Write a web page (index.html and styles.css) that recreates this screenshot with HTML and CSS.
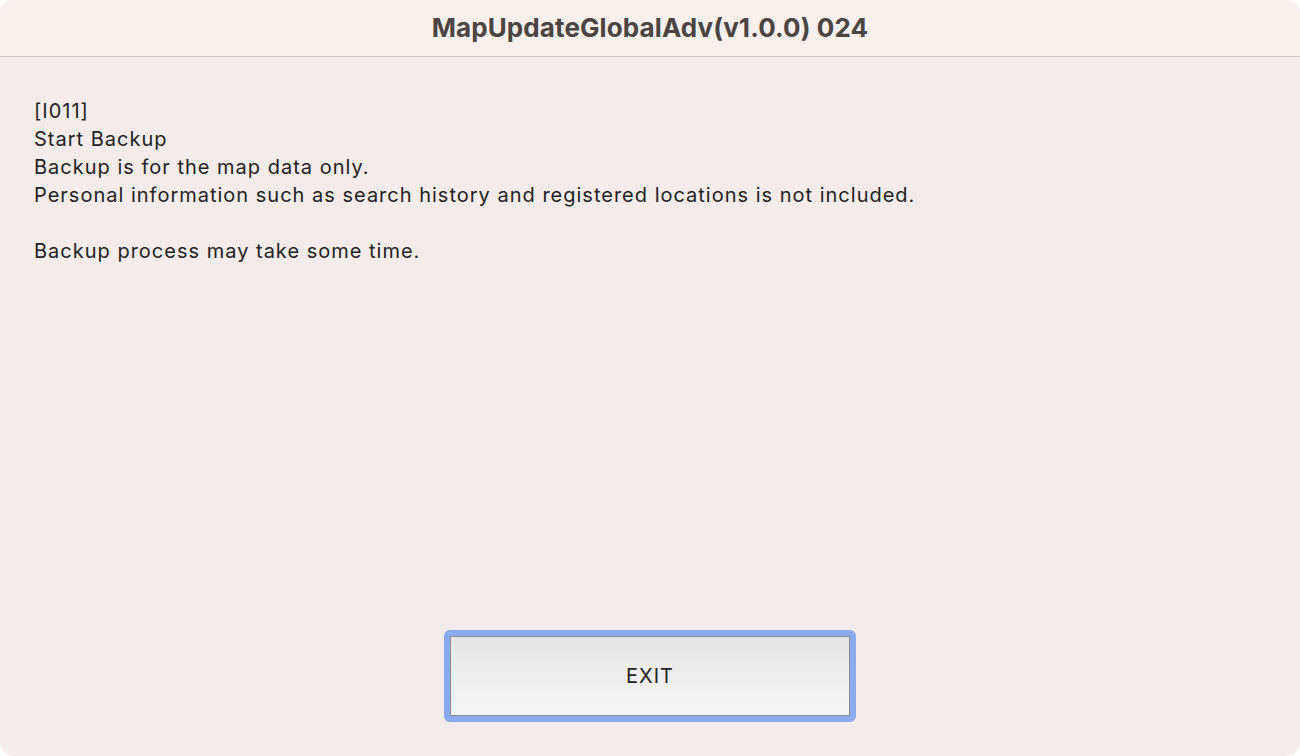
FILE: index.html
```html
<!DOCTYPE html>
<html>
  <head>
    <meta charset="utf-8">
    <title>MapUpdateGlobalAdv</title>
    <link rel="stylesheet" href="styles.css">
  </head>
  <body>
    <div class="window">
      <div class="titlebar">MapUpdateGlobalAdv(v1.0.0) 024</div>
      <div class="content">
        <div class="message">
          <p>[I011]</p>
          <p>Start Backup</p>
          <p>Backup is for the map data only.</p>
          <p>Personal information such as search history and registered locations is not included.</p>
          <p>&nbsp;</p>
          <p>Backup process may take some time.</p>
        </div>
        <div class="actions">
          <div class="focus-ring">
            <button class="exit">EXIT</button>
          </div>
        </div>
      </div>
    </div>
  </body>
</html>
```

FILE: styles.css
```css
html, body {
  margin: 0;
  padding: 0;
  height: 100%;
  background-color: #fff;
  overflow: hidden;
}
.window {
  height: 756px;
  width: 1300px;
  display: flex;
  flex-direction: column;
  background-color: #f4ecea;
  border-radius: 14px;
  overflow: hidden;
  font-family: Inter, "Noto Sans", sans-serif;
}
.titlebar {
  height: 57px;
  flex: none;
  display: flex;
  align-items: center;
  justify-content: center;
  padding-bottom: 2px;
  background-color: #f8f0ed;
  border-bottom: 1px solid #d2c9c7;
  color: #4a4442;
  font-size: 26px;
  font-weight: 700;
  letter-spacing: 0.1px;
  box-sizing: border-box;
}
.content {
  flex: 1;
  display: flex;
  flex-direction: column;
  padding: 40px 34px 34px;
}
.message {
  flex: 1;
  color: #222;
  font-size: 20px;
  line-height: 28px;
  letter-spacing: 1px;
}
.message p {
  margin: 0;
}
.actions {
  display: flex;
  justify-content: center;
}
.focus-ring {
  padding: 6px;
  border-radius: 6px;
  background-color: #8aabf0;
}
.exit {
  display: block;
  width: 400px;
  height: 80px;
  box-sizing: border-box;
  border: 1px solid #8c8c8c;
  border-radius: 0;
  background: linear-gradient(#e6e6e6, #f6f6f6);
  color: #222;
  font-family: Inter, "Noto Sans", sans-serif;
  font-size: 20px;
  letter-spacing: 1px;
  padding: 0;
}
```
